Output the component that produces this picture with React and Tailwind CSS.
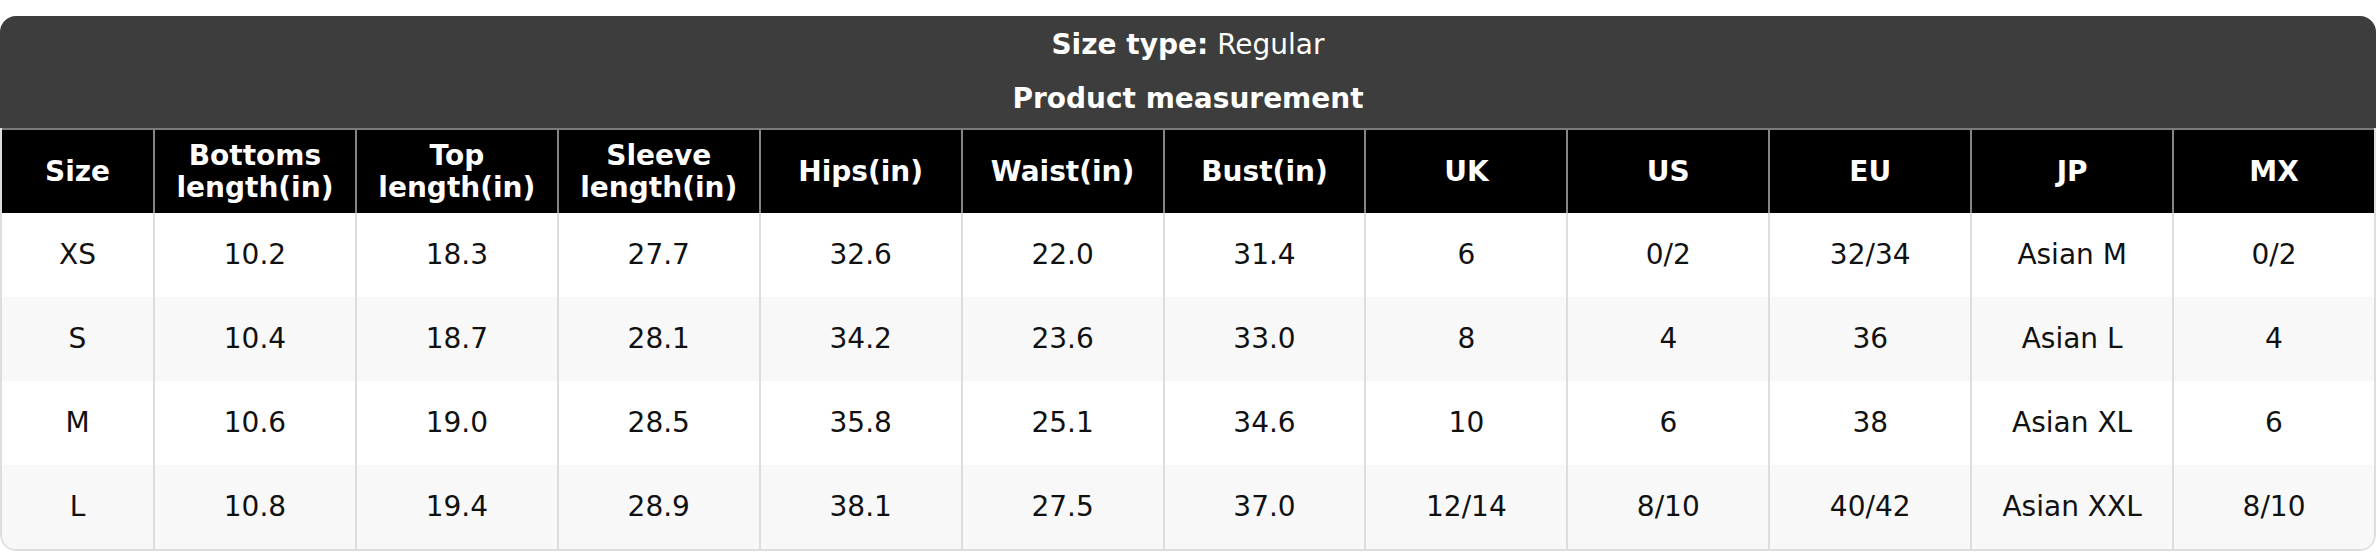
import React from 'react';

const columns = [
  ['Size'],
  ['Bottoms', 'length(in)'],
  ['Top', 'length(in)'],
  ['Sleeve', 'length(in)'],
  ['Hips(in)'],
  ['Waist(in)'],
  ['Bust(in)'],
  ['UK'],
  ['US'],
  ['EU'],
  ['JP'],
  ['MX'],
];

const rows = [
  ['XS', '10.2', '18.3', '27.7', '32.6', '22.0', '31.4', '6', '0/2', '32/34', 'Asian M', '0/2'],
  ['S', '10.4', '18.7', '28.1', '34.2', '23.6', '33.0', '8', '4', '36', 'Asian L', '4'],
  ['M', '10.6', '19.0', '28.5', '35.8', '25.1', '34.6', '10', '6', '38', 'Asian XL', '6'],
  ['L', '10.8', '19.4', '28.9', '38.1', '27.5', '37.0', '12/14', '8/10', '40/42', 'Asian XXL', '8/10'],
];

const grid = 'grid grid-cols-[151px_repeat(11,minmax(0,1fr))]';

const App = () => {
  return (
    <div className="w-[2376px] h-[552px] bg-white pt-4 font-['DejaVu_Sans',sans-serif]">
      <div className="rounded-[16px] overflow-hidden">
        {/* title block */}
        <div className="bg-[#3d3d3d] text-white text-[28px] text-center">
          <div className="h-[56px] flex items-center justify-center pt-[2px]">
            <span className="font-bold">Size type:</span>
            <span className="ml-[9px]">Regular</span>
          </div>
          <div className="h-[56px] flex items-center justify-center font-bold pb-[2px]">
            Product measurement
          </div>
        </div>

        <div className="border-x-2 border-b-2 border-[#dddddd] rounded-b-[16px] overflow-hidden">
          {/* column header */}
          <div className={`${grid} bg-black text-white font-bold text-[28px] leading-[32px] border-t-2 border-[#7a7a7a] h-[85px]`}>
            {columns.map((lines, i) => (
              <div
                key={i}
                className={`flex flex-col items-center justify-center text-center ${i > 0 ? 'border-l-2 border-[#858585]' : ''}`}
              >
                {lines.map((l) => (
                  <span key={l}>{l}</span>
                ))}
              </div>
            ))}
          </div>

          {/* body rows */}
          {rows.map((row, r) => (
            <div
              key={row[0]}
              className={`${grid} text-[28px] text-[#111] h-[84px] ${r % 2 === 1 ? 'bg-[#f8f8f8]' : 'bg-white'}`}
            >
              {row.map((cell, i) => (
                <div
                  key={i}
                  className={`flex items-center justify-center ${i > 0 ? 'border-l-2 border-[#dddddd]' : ''}`}
                >
                  {cell}
                </div>
              ))}
            </div>
          ))}
        </div>
      </div>
    </div>
  );
};

export default App;
